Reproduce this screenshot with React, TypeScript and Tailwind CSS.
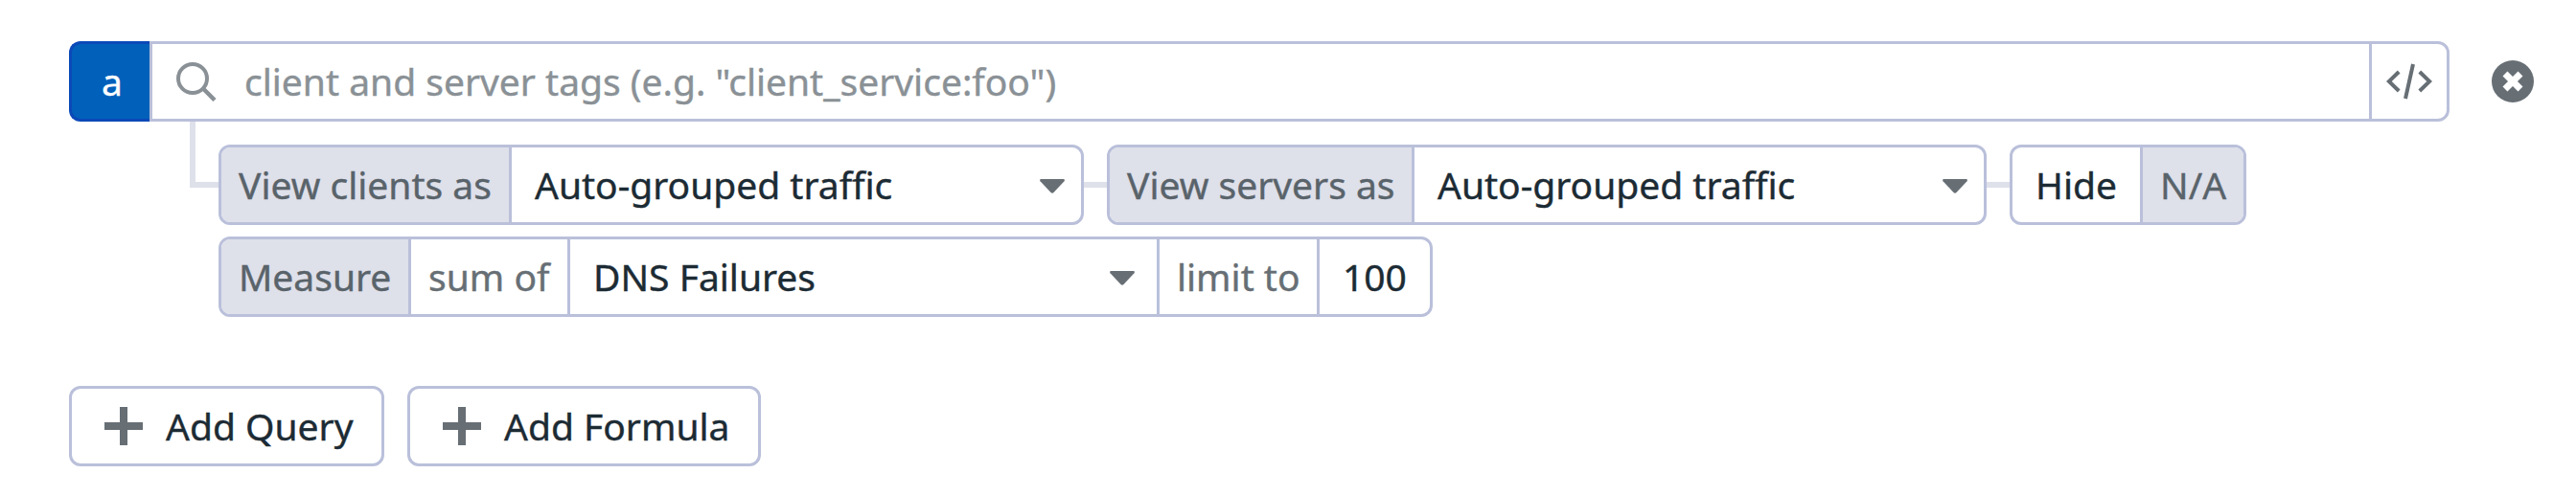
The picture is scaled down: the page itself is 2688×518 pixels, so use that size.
import type { ReactNode } from "react";

function Group({ children, className = "" }: { children: ReactNode; className?: string }) {
  return (
    <div
      className={`flex h-[84px] shrink-0 overflow-hidden rounded-xl border-[3px] border-[#bac0da] bg-white ${className}`}
    >
      {children}
    </div>
  );
}

function Cell({ children, className = "" }: { children?: ReactNode; className?: string }) {
  return <div className={`flex shrink-0 items-center pb-px whitespace-nowrap ${className}`}>{children}</div>;
}

const divider = "border-r-[3px] border-[#bac0da]";
const label = "bg-[#dee0ea] text-[#59636a]";

function Caret() {
  return (
    <svg viewBox="0 0 26 15" className="mt-1 h-[15px] w-[26px] fill-[#676f75]">
      <path d="M1 0H25Q26.600 .600 25.500 2.200L14.500 14Q13 15.500 11.500 14L.5 2.200Q-.6 .6 1 0Z" />
    </svg>
  );
}

function Plus() {
  return (
    <svg viewBox="0 0 40 40" className="mt-px size-10 fill-[#676f75]">
      <path d="M16 0h8v16h16v8H24v16h-8V24H0v-8h16z" />
    </svg>
  );
}

function Connector() {
  return <div className="h-1.5 w-6 shrink-0 bg-[#dee0ea]" />;
}

function AddButton({ text, className }: { text: string; className: string }) {
  return (
    <button
      className={`flex h-[84px] shrink-0 items-center gap-6 rounded-xl border-[3px] border-[#bac0da] pb-px pl-[34px] whitespace-nowrap ${className}`}
    >
      <Plus />
      {text}
    </button>
  );
}

export default function App() {
  return (
    <main className="flex h-[518px] w-[2688px] flex-col bg-white pt-[43px] pl-[72px] font-['Noto_Sans',sans-serif] text-[39px] leading-none text-[#1c2b34] [-webkit-text-stroke:0.4px_currentColor]">
      <div className="flex items-center">
        <div className="flex h-[84px] w-[84px] items-center justify-center rounded-l-xl border-[3px] border-r-0 border-[#0b49b8] bg-[#0060ba] pb-px pl-[3px] text-white">
          a
        </div>
        <Group className="w-[2400px] rounded-l-none">
          <Cell className={`w-[2316px] pl-[25px] ${divider}`}>
            <svg viewBox="0 0 42 42" className="mt-px mr-[29px] size-[42px] fill-none stroke-[#8a9196]">
              <circle cx="17" cy="18" r="15" strokeWidth="4" />
              <path d="M28 28.500L40 40.500" strokeWidth="4.500" />
            </svg>
            <span className="text-[#8a9196]">client and server tags (e.g. "client_service:foo")</span>
          </Cell>
          <Cell className="w-[78px] pl-[15px]">
            <svg viewBox="0 0 48 38" className="mt-px h-[38px] w-12 fill-none stroke-[#676f75]" strokeWidth="4">
              <path d="M13.200 9L2.800 19L13.200 29M34.800 9L45.200 19L34.800 29M28 1L20 37" />
            </svg>
          </Cell>
        </Group>
        <svg viewBox="0 0 44 44" className="ml-11 size-11">
          <circle cx="22" cy="22" r="22" className="fill-[#676f75]" />
          <path d="M14 14L30 30M30 14L14 30" className="stroke-white" strokeWidth="7" />
        </svg>
      </div>

      <div className="flex pl-[126px]">
        <div className="h-[69px] w-[30px] shrink-0 border-b-[6px] border-l-[6px] border-[#dee0ea]" />
        <div className="flex flex-col gap-3 pt-6">
          <div className="flex items-center">
            <Group className="w-[903px]">
              <Cell className={`w-[303px] pl-[18px] ${label} ${divider}`}>View clients as</Cell>
              <Cell className="w-[594px] justify-between pr-[17px] pl-6">
                Auto-grouped traffic
                <Caret />
              </Cell>
            </Group>
            <Connector />
            <Group className="w-[918px]">
              <Cell className={`w-[318px] pl-[18px] ${label} ${divider}`}>View servers as</Cell>
              <Cell className="w-[594px] justify-between pr-[17px] pl-6">
                Auto-grouped traffic
                <Caret />
              </Cell>
            </Group>
            <Connector />
            <Group className="w-[247px]">
              <Cell className={`w-[136px] pl-6 ${divider}`}>Hide</Cell>
              <Cell className={`w-[105px] pl-[18px] ${label}`}>N/A</Cell>
            </Group>
          </div>
          <Group className="w-[1267px]">
            <Cell className={`w-[198px] pl-[18px] ${label} ${divider}`}>Measure</Cell>
            <Cell className={`w-[166px] pl-[18px] text-[#676f75] ${divider}`}>sum of</Cell>
            <Cell className={`w-[615px] justify-between pr-[23px] pl-6 ${divider}`}>
              DNS Failures
              <Caret />
            </Cell>
            <Cell className={`w-[167px] pl-[18px] text-[#676f75] ${divider}`}>limit to</Cell>
            <Cell className="w-[115px] pl-6">100</Cell>
          </Group>
        </div>
      </div>

      <div className="mt-[72px] flex gap-6">
        <AddButton text="Add Query" className="w-[329px]" />
        <AddButton text="Add Formula" className="w-[369px]" />
      </div>
    </main>
  );
}
